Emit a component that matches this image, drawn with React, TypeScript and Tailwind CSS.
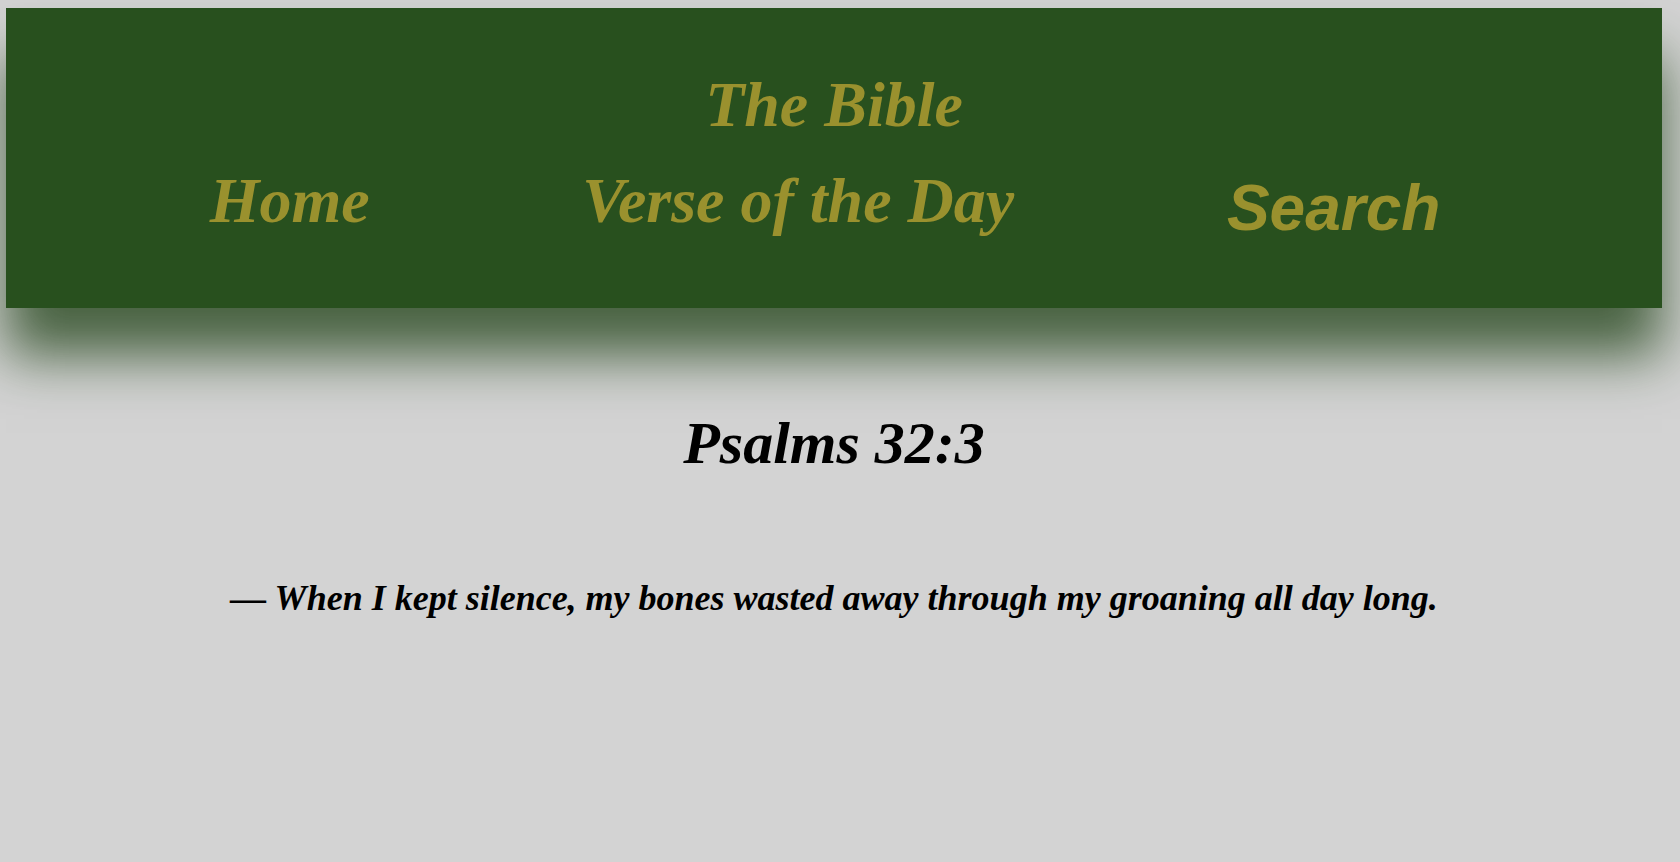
const NAV = ["Home", "Verse of the Day"];

export default function App() {
  return (
    <div className="min-h-screen bg-[#d3d3d3] pt-[8px] pl-[6px]">
      <div className="w-[1656px]">
        {/* Header */}
        <header className="h-[300px] bg-[#28501e] shadow-[0_48px_52px_rgba(20,55,10,0.72)] flex flex-col items-center pt-[49px] text-[#9a912e] text-[64px] leading-normal font-bold italic font-['Liberation_Serif',serif]">
          <h1>The Bible</h1>
          <nav className="-ml-[18px] w-full flex justify-evenly items-start">
            {NAV.map((label) => (
              <a key={label} href="#">
                {label}
              </a>
            ))}
            <a href="#" className="pt-[7px] font-['Liberation_Sans',sans-serif]">
              Search
            </a>
          </nav>
        </header>

        {/* Verse of the day */}
        <main className="text-center text-black font-bold italic leading-normal font-['Liberation_Serif',serif]">
          <h2 className="mt-[90px] text-[60px]">Psalms 32:3</h2>
          <p className="mt-[83px] text-[36px]">
            — When I kept silence, my bones wasted away through my groaning all
            day long.
          </p>
        </main>
      </div>
    </div>
  );
}
